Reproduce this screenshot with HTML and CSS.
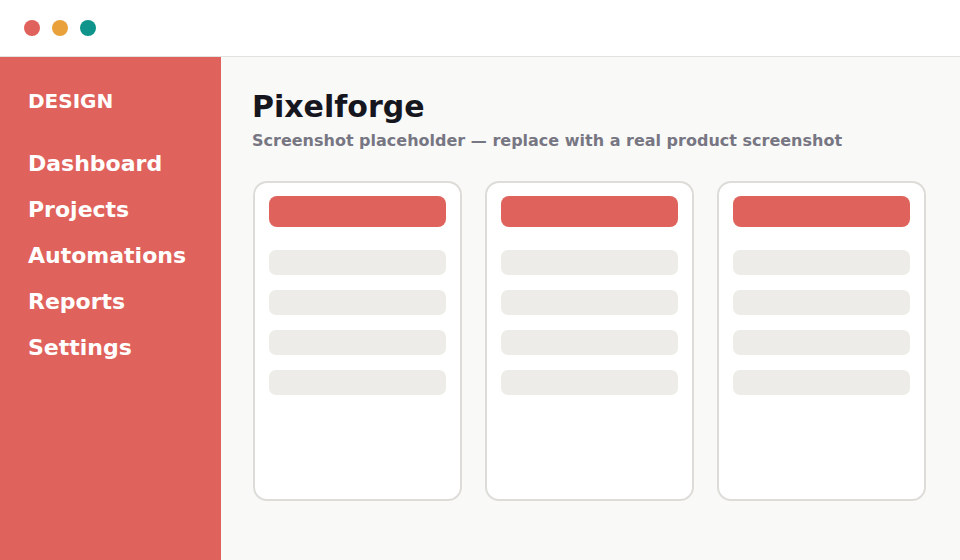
FILE: index.html
```html
<!DOCTYPE html>
<html>
  <head>
    <title>Pixelforge</title>
    <link rel="stylesheet" href="styles.css">
  </head>
  <body>
    <div class="titlebar">
      <span class="dot red"></span>
      <span class="dot amber"></span>
      <span class="dot teal"></span>
    </div>
    <div class="layout">
      <div class="sidebar">
        <p class="brand">DESIGN</p>
        <ul class="nav">
          <li>Dashboard</li>
          <li>Projects</li>
          <li>Automations</li>
          <li>Reports</li>
          <li>Settings</li>
        </ul>
      </div>
      <div class="main">
        <h1>Pixelforge</h1>
        <p class="subtitle">Screenshot placeholder — replace with a real product screenshot</p>
        <div class="cards">
          <div class="card">
            <div class="card_head"></div>
            <div class="line"></div>
            <div class="line"></div>
            <div class="line"></div>
            <div class="line"></div>
          </div>
          <div class="card">
            <div class="card_head"></div>
            <div class="line"></div>
            <div class="line"></div>
            <div class="line"></div>
            <div class="line"></div>
          </div>
          <div class="card">
            <div class="card_head"></div>
            <div class="line"></div>
            <div class="line"></div>
            <div class="line"></div>
            <div class="line"></div>
          </div>
        </div>
      </div>
    </div>
  </body>
</html>
```

FILE: styles.css
```css
body {
  margin: 0;
  font-family: "DejaVu Sans", sans-serif;
  font-weight: bold;
  background: #f9f9f7;
}

.titlebar {
  height: 56px;
  background: #fff;
  border-bottom: 1px solid #e2e2df;
  display: flex;
  align-items: center;
  gap: 12px;
  padding-left: 24px;
}

.dot {
  width: 16px;
  height: 16px;
  border-radius: 50%;
}
.dot.red { background: #e0625c; }
.dot.amber { background: #e9a23b; }
.dot.teal { background: #0f948b; }

.layout {
  display: flex;
  height: 503px;
}

.sidebar {
  width: 221px;
  background: #e0625c;
  color: #fff;
  box-sizing: border-box;
  padding: 32px 0 0 28px;
}

.brand {
  margin: 0;
  font-size: 20px;
  line-height: 24px;
}

.nav {
  list-style: none;
  margin: 38px 0 0 0;
  padding: 0;
}

.nav li {
  font-size: 22px;
  line-height: 26px;
  margin-bottom: 20px;
}

.main {
  flex: 1;
  padding: 32px 34px 0 31px;
}

h1 {
  margin: 0;
  font-size: 30px;
  line-height: 36px;
  color: #16161f;
}

.subtitle {
  margin: 6px 0 0 0;
  font-size: 16px;
  line-height: 19px;
  color: #777683;
}

.cards {
  display: grid;
  grid-template-columns: repeat(3, 1fr);
  gap: 23px;
  margin-top: 31px;
  padding-left: 1px;
}

.card {
  height: 320px;
  box-sizing: border-box;
  background: #fff;
  border: 2px solid #dddcd8;
  border-radius: 14px;
  padding: 13px 14px;
}

.card_head {
  height: 31px;
  background: #e0625c;
  border-radius: 8px;
  margin-bottom: 23px;
}

.line {
  height: 25px;
  background: #eeece8;
  border-radius: 7px;
  margin-bottom: 15px;
}
```
